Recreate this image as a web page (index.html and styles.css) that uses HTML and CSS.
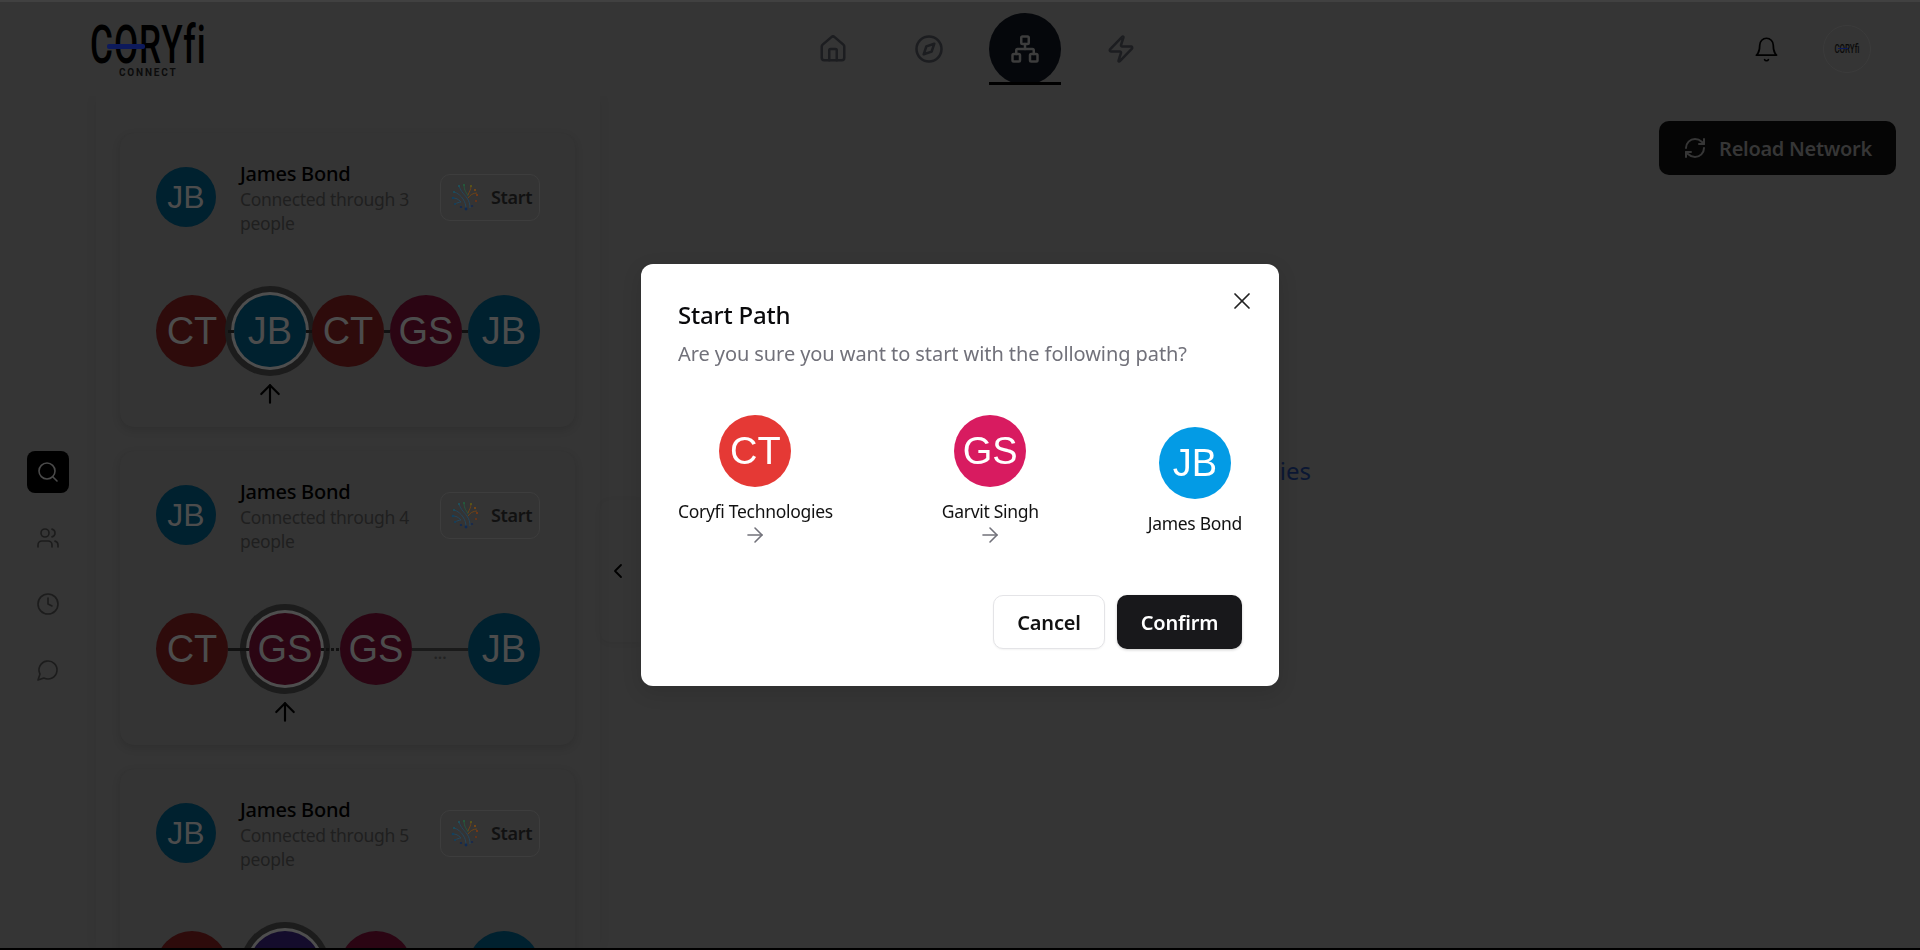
FILE: index.html
```html
<!DOCTYPE html>
<html lang="en">
<head>
  <meta charset="UTF-8" />
  <meta name="viewport" content="width=device-width, initial-scale=1.0" />
  <title>Coryfi Connect</title>
  <link rel="stylesheet" href="styles.css">
</head>
<body>
  <svg class="sprite" aria-hidden="true">
    <symbol id="i-home" viewBox="0 0 24 24"><path d="M15 21v-8a1 1 0 0 0-1-1h-4a1 1 0 0 0-1 1v8"/><path d="M3 10a2 2 0 0 1 .709-1.528l7-5.999a2 2 0 0 1 2.582 0l7 5.999A2 2 0 0 1 21 10v9a2 2 0 0 1-2 2H5a2 2 0 0 1-2-2z"/></symbol>
    <symbol id="i-compass" viewBox="0 0 24 24"><circle cx="12" cy="12" r="10"/><polygon points="16.24 7.76 14.12 14.12 7.76 16.24 9.88 9.88"/></symbol>
    <symbol id="i-network" viewBox="0 0 24 24"><rect x="16" y="16" width="6" height="6" rx="1"/><rect x="2" y="16" width="6" height="6" rx="1"/><rect x="9" y="2" width="6" height="6" rx="1"/><path d="M5 16v-3a1 1 0 0 1 1-1h12a1 1 0 0 1 1 1v3"/><path d="M12 12V8"/></symbol>
    <symbol id="i-zap" viewBox="0 0 24 24"><path d="M4 14a1 1 0 0 1-.78-1.63l9.9-10.2a.5.5 0 0 1 .86.46l-1.92 6.02A1 1 0 0 0 13 10h7a1 1 0 0 1 .78 1.63l-9.9 10.2a.5.5 0 0 1-.86-.46l1.92-6.02A1 1 0 0 0 11 14z"/></symbol>
    <symbol id="i-bell" viewBox="0 0 24 24"><path d="M6 8a6 6 0 0 1 12 0c0 7 3 9 3 9H3s3-2 3-9"/><path d="M10.3 21a1.94 1.94 0 0 0 3.4 0"/></symbol>
    <symbol id="i-search" viewBox="0 0 24 24"><circle cx="11" cy="11" r="8"/><path d="m21 21-4.3-4.3"/></symbol>
    <symbol id="i-users" viewBox="0 0 24 24"><path d="M16 21v-2a4 4 0 0 0-4-4H6a4 4 0 0 0-4 4v2"/><circle cx="9" cy="7" r="4"/><path d="M22 21v-2a4 4 0 0 0-3-3.87"/><path d="M16 3.13a4 4 0 0 1 0 7.75"/></symbol>
    <symbol id="i-clock" viewBox="0 0 24 24"><circle cx="12" cy="12" r="10"/><polyline points="12 6 12 12 16 14"/></symbol>
    <symbol id="i-chat" viewBox="0 0 24 24"><path d="M7.9 20A9 9 0 1 0 4 16.1L2 22Z"/></symbol>
    <symbol id="i-reload" viewBox="0 0 24 24"><path d="M3 12a9 9 0 0 1 9-9 9.75 9.75 0 0 1 6.74 2.74L21 8"/><path d="M21 3v5h-5"/><path d="M21 12a9 9 0 0 1-9 9 9.75 9.75 0 0 1-6.74-2.74L3 16"/><path d="M8 16H3v5"/></symbol>
    <symbol id="i-x" viewBox="0 0 24 24"><path d="M18 6 6 18"/><path d="m6 6 12 12"/></symbol>
    <symbol id="i-right" viewBox="0 0 24 24"><path d="M5 12h14"/><path d="m12 5 7 7-7 7"/></symbol>
    <symbol id="i-up" viewBox="0 0 24 24"><path d="m5 12 7-7 7 7"/><path d="M12 19V5"/></symbol>
    <symbol id="i-left" viewBox="0 0 24 24"><path d="m15 18-6-6 6-6"/></symbol>
    <symbol id="i-spark" viewBox="0 0 28 28">
      <g fill="none" stroke-width="1">
        <path stroke="#24465c" d="M8 3c2 6 6 9 8 12s3 6 3 10"/>
        <path stroke="#24465c" d="M3 9c4 1 7 4 9 7s3 6 3 10"/>
        <path stroke="#25583f" d="M13 2c0 6 3 8 4 11"/>
        <path stroke="#6b4318" d="M20 3c0 4-2 6-3 9"/>
        <path stroke="#6b4318" d="M26 10c-4 0-7 2-9 5"/>
        <path stroke="#24465c" d="M2 15c3 0 5 1 8 4"/>
        <path stroke="#24465c" d="M4 21c2-1 4-2 6-2"/>
      </g>
      <g>
        <circle cx="8" cy="3" r="1.1" fill="#1d5560"/><circle cx="13" cy="2" r="1.1" fill="#22603d"/>
        <circle cx="20" cy="3" r="1.1" fill="#5f5a14"/><circle cx="24" cy="7" r="1.1" fill="#804a10"/>
        <circle cx="26" cy="12" r="1.1" fill="#803a10"/><circle cx="25" cy="18" r="1.1" fill="#6e3314"/>
        <circle cx="21" cy="23" r="1.1" fill="#16284f"/><circle cx="15" cy="26" r="1.4" fill="#0e2a55"/>
        <circle cx="10" cy="24" r="1.1" fill="#0e2a55"/><circle cx="4" cy="21" r="1.1" fill="#12405e"/>
        <circle cx="2" cy="15" r="1.3" fill="#12405e"/><circle cx="3" cy="9" r="1.1" fill="#175060"/>
      </g>
    </symbol>
  </svg>

  <header class="topbar">
    <div class="logo">
      <span class="logo-word">CORYfi</span>
      <span class="logo-dash"></span>
      <span class="logo-sub">CONNECT</span>
    </div>
    <nav class="nav">
      <a class="nav-item"><svg class="icon icon-nav"><use href="#i-home"/></svg></a>
      <a class="nav-item"><svg class="icon icon-nav"><use href="#i-compass"/></svg></a>
      <a class="nav-item active"><svg class="icon icon-nav"><use href="#i-network"/></svg></a>
      <a class="nav-item"><svg class="icon icon-nav"><use href="#i-zap"/></svg></a>
    </nav>
    <div class="top-right">
      <svg class="icon icon-bell"><use href="#i-bell"/></svg>
      <div class="me">
        <span class="me-word">CORYfi</span>
        <span class="me-dash"></span>
      </div>
    </div>
  </header>

  <main class="main">
    <aside class="side">
      <a class="side-item active"><svg class="icon icon-side"><use href="#i-search"/></svg></a>
      <a class="side-item"><svg class="icon icon-side"><use href="#i-users"/></svg></a>
      <a class="side-item"><svg class="icon icon-side"><use href="#i-clock"/></svg></a>
      <a class="side-item"><svg class="icon icon-side"><use href="#i-chat"/></svg></a>
    </aside>

    <section class="paths">
      <article class="card">
        <div class="card-head">
          <div class="avatar small blue">JB</div>
          <div class="card-text">
            <div class="card-name">James Bond</div>
            <div class="card-sub">Connected through 3 people</div>
          </div>
          <button class="start-btn"><svg class="spark"><use href="#i-spark"/></svg>Start</button>
        </div>
        <div class="chain">
          <div class="avatar red">CT</div>
          <span class="link link-s"></span>
          <div class="avatar blue picked">JB</div>
          <span class="link link-s"></span>
          <div class="avatar red">CT</div>
          <span class="link link-s"></span>
          <div class="avatar pink">GS</div>
          <span class="link link-s"></span>
          <div class="avatar blue">JB</div>
        </div>
        <svg class="icon icon-up up-one"><use href="#i-up"/></svg>
      </article>

      <article class="card">
        <div class="card-head">
          <div class="avatar small blue">JB</div>
          <div class="card-text">
            <div class="card-name">James Bond</div>
            <div class="card-sub">Connected through 4 people</div>
          </div>
          <button class="start-btn"><svg class="spark"><use href="#i-spark"/></svg>Start</button>
        </div>
        <div class="chain">
          <div class="avatar red">CT</div>
          <span class="link link-a"></span>
          <div class="avatar pink picked">GS</div>
          <span class="link link-b dashed"></span>
          <div class="avatar pink">GS</div>
          <span class="link link-l"><span class="more">...</span></span>
          <div class="avatar blue">JB</div>
        </div>
        <svg class="icon icon-up up-two"><use href="#i-up"/></svg>
      </article>

      <article class="card">
        <div class="card-head">
          <div class="avatar small blue">JB</div>
          <div class="card-text">
            <div class="card-name">James Bond</div>
            <div class="card-sub">Connected through 5 people</div>
          </div>
          <button class="start-btn"><svg class="spark"><use href="#i-spark"/></svg>Start</button>
        </div>
        <div class="chain">
          <div class="avatar red">CT</div>
          <span class="link link-a"></span>
          <div class="avatar purple picked">GS</div>
          <span class="link link-b dashed"></span>
          <div class="avatar pink">GS</div>
          <span class="link link-l"><span class="more">...</span></span>
          <div class="avatar blue">JB</div>
        </div>
      </article>
    </section>

    <div class="handle"><svg class="icon icon-handle"><use href="#i-left"/></svg></div>

    <section class="canvas">
      <button class="reload-btn"><svg class="icon icon-reload"><use href="#i-reload"/></svg>Reload Network</button>
      <span class="node-label">Coryfi Technologies</span>
    </section>
  </main>
  <div class="edge"></div>

  <div class="scrim">
    <div class="modal">
      <svg class="icon modal-close"><use href="#i-x"/></svg>
      <h2 class="modal-title">Start Path</h2>
      <p class="modal-sub">Are you sure you want to start with the following path?</p>
      <div class="path-row">
        <div class="step">
          <div class="avatar red lit">CT</div>
          <div class="step-name">Coryfi Technologies</div>
          <svg class="icon step-arrow"><use href="#i-right"/></svg>
        </div>
        <div class="step">
          <div class="avatar pink lit">GS</div>
          <div class="step-name">Garvit Singh</div>
          <svg class="icon step-arrow"><use href="#i-right"/></svg>
        </div>
        <div class="step">
          <div class="avatar blue lit">JB</div>
          <div class="step-name">James Bond</div>
        </div>
      </div>
      <div class="modal-actions">
        <button class="btn btn-cancel">Cancel</button>
        <button class="btn btn-confirm">Confirm</button>
      </div>
    </div>
  </div>
</body>
</html>
```

FILE: styles.css
```css
* {
  box-sizing: border-box;
  margin: 0;
  padding: 0;
}
body {
  display: flex;
  flex-direction: column;
  height: 100vh;
  overflow: hidden;
  background: #353535;
  border-top: 2px solid #414141;
  font-family: 'Noto Sans', 'Open Sans', sans-serif;
  color: #000;
}
.sprite {
  display: none;
}
.icon {
  fill: none;
  stroke: currentColor;
  stroke-width: 2;
  stroke-linecap: round;
  stroke-linejoin: round;
  flex: none;
}

/* top bar */
.topbar {
  display: flex;
  justify-content: space-between;
  align-items: center;
  height: 94px;
  padding: 0 49px 0 90px;
  flex: none;
}
.logo {
  position: relative;
  width: 110px;
  height: 54px;
  margin-top: 5px;
}
.logo-word {
  display: block;
  height: 40px;
  font-family: 'Roboto', sans-serif;
  font-size: 54px;
  font-weight: 500;
  line-height: 40px;
  letter-spacing: 1.5px;
  color: #000;
  transform: scaleX(.65);
  transform-origin: left center;
  white-space: nowrap;
}
.logo-dash {
  position: absolute;
  left: 17px;
  top: 19px;
  width: 38px;
  height: 5px;
  background: #0d1a5c;
  border-radius: 2px;
}
.logo-sub {
  position: absolute;
  left: 29px;
  top: 42px;
  font-family: 'Roboto', sans-serif;
  font-size: 10px;
  font-weight: 700;
  line-height: 12px;
  letter-spacing: 1.8px;
  color: #0c0c0c;
}
.nav {
  display: flex;
  gap: 24px;
}
.nav-item {
  position: relative;
  display: flex;
  justify-content: center;
  align-items: center;
  width: 72px;
  height: 72px;
  color: #1c1d20;
}
.nav-item.active {
  background: #05070b;
  border-radius: 50%;
  color: #3d3d3d;
}
.nav-item.active::after {
  content: '';
  position: absolute;
  left: 0;
  right: 0;
  bottom: 0;
  height: 3px;
  background: #000;
}
.icon-nav {
  width: 30px;
  height: 30px;
}
.top-right {
  display: flex;
  align-items: center;
  gap: 43px;
}
.icon-bell {
  width: 27px;
  height: 27px;
  stroke-width: 1.5;
  color: #000;
}
.me {
  position: relative;
  display: flex;
  justify-content: center;
  align-items: center;
  width: 48px;
  height: 48px;
  border: 1px solid #3b3b3b;
  border-radius: 50%;
  overflow: hidden;
}
.me-word {
  font-family: 'Roboto', sans-serif;
  font-size: 12px;
  font-weight: 500;
  color: #0a0a0a;
  transform: scaleX(.66);
}
.me-dash {
  position: absolute;
  left: 14px;
  top: 22px;
  width: 10px;
  height: 1px;
  background: #0d1a5c;
}

/* main area */
.main {
  display: flex;
  flex: 1;
  min-height: 0;
  overflow: hidden;
}
.side {
  display: flex;
  flex-direction: column;
  gap: 24px;
  width: 96px;
  padding: 355px 0 0 27px;
  flex: none;
}
.side-item {
  display: flex;
  justify-content: center;
  align-items: center;
  width: 42px;
  height: 42px;
  border-radius: 8px;
  color: #1c1c1c;
}
.side-item.active {
  background: #000;
  color: #4a4a4a;
}
.icon-side {
  width: 24px;
  height: 24px;
  stroke-width: 1.6;
}
.paths {
  display: flex;
  flex-direction: column;
  gap: 24px;
  width: 504px;
  padding: 37px 0 0 24px;
  flex: none;
  box-shadow: 0 0 12px rgba(0, 0, 0, .05);
}
.card {
  width: 455px;
  height: 294px;
  padding: 25px 35px 0 36px;
  flex: none;
  background: #343434;
  border-radius: 14px;
  box-shadow: 0 3px 8px rgba(0, 0, 0, .12);
}
.card-head {
  display: flex;
  align-items: center;
  height: 78px;
}
.avatar {
  display: flex;
  justify-content: center;
  align-items: center;
  width: 72px;
  height: 72px;
  flex: none;
  border-radius: 50%;
  font-family: 'Liberation Sans', Arial, sans-serif;
  font-size: 38px;
  color: #4c4c4c;
}
.avatar.small {
  width: 60px;
  height: 60px;
  font-size: 32px;
}
.avatar.red { background: #2e0b0b; }
.avatar.pink { background: #2b0513; }
.avatar.blue { background: #00212f; }
.avatar.purple { background: #140c2c; }
.avatar.picked {
  box-shadow: 0 0 0 3px #4e4e4e, 0 0 0 9px #1c1c1c;
}
.card-text {
  width: 176px;
  margin-left: 24px;
}
.card-name {
  margin-bottom: -2px;
  font-size: 20px;
  font-weight: 500;
  line-height: 30px;
  letter-spacing: -.25px;
}
.card-sub {
  font-size: 17.5px;
  line-height: 24px;
  letter-spacing: -.3px;
  color: #1f1f1f;
}
.start-btn {
  display: flex;
  align-items: center;
  gap: 12px;
  width: 100px;
  height: 47px;
  margin-left: auto;
  padding-left: 10px;
  background: none;
  border: 1px solid #3d3d3d;
  border-radius: 10px;
  font-family: inherit;
  font-size: 18px;
  font-weight: 600;
  letter-spacing: -.35px;
  color: #111;
}
.spark {
  width: 28px;
  height: 28px;
  flex: none;
}
.chain {
  display: flex;
  align-items: center;
  margin-top: 59px;
}
.link {
  position: relative;
  height: 3px;
  flex: none;
  background: #111;
}
.link-s { width: 6px; }
.link-a { width: 21px; }
.link-b { width: 19px; }
.link-l { width: 56px; background: #1a1a1a; }
.dashed {
  background: repeating-linear-gradient(90deg, #111 0 3px, transparent 3px 5px);
}
.more {
  position: absolute;
  left: 0;
  right: 0;
  top: -4px;
  text-align: center;
  font-size: 16px;
  font-weight: 600;
  line-height: 18px;
  color: #222;
}
.icon-up {
  display: block;
  width: 30px;
  height: 30px;
  margin-top: 12px;
  stroke-width: 1.7;
  color: #000;
}
.up-one { margin-left: 99px; }
.up-two { margin-left: 114px; }

/* collapse handle and graph area */
.handle {
  display: flex;
  align-items: center;
  justify-content: center;
  width: 40px;
  height: 142px;
  margin-top: 404px;
  padding-right: 4px;
  flex: none;
  border-radius: 10px 0 0 10px;
  box-shadow: 0 1px 6px rgba(0, 0, 0, .05);
}
.icon-handle {
  width: 24px;
  height: 24px;
  stroke-width: 1.8;
  color: #000;
}
.canvas {
  position: relative;
  display: flex;
  flex-direction: column;
  align-items: flex-end;
  flex: 1;
  padding: 25px 24px 0 0;
}
.reload-btn {
  display: flex;
  align-items: center;
  justify-content: center;
  gap: 12px;
  width: 237px;
  height: 54px;
  background: #050505;
  border: none;
  border-radius: 10px;
  font-family: inherit;
  font-size: 20px;
  font-weight: 600;
  letter-spacing: -.3px;
  color: #363636;
}
.icon-reload {
  width: 24px;
  height: 24px;
}
.node-label {
  position: absolute;
  right: 609px;
  top: 359px;
  font-size: 24px;
  line-height: 32px;
  white-space: nowrap;
  color: #0b1733;
}
.edge {
  height: 2px;
  flex: none;
  background: #000;
}

/* modal */
.scrim {
  position: fixed;
  inset: 0;
  display: flex;
  justify-content: center;
  align-items: center;
}
.modal {
  position: relative;
  width: 638px;
  height: 422px;
  padding: 35px 37px 37px 37px;
  background: #fff;
  border-radius: 12px;
  box-shadow: 0 6px 20px rgba(0, 0, 0, .12);
}
.modal-close {
  position: absolute;
  top: 23px;
  right: 23px;
  width: 28px;
  height: 28px;
  stroke-width: 1.5;
  color: #222;
}
.modal-title {
  font-size: 24px;
  font-weight: 500;
  line-height: 32px;
  letter-spacing: -.2px;
  color: #09090b;
}
.modal-sub {
  margin-top: 9px;
  font-size: 20px;
  line-height: 28px;
  letter-spacing: -.08px;
  color: #71717a;
}
.path-row {
  display: flex;
  justify-content: space-between;
  align-items: center;
  height: 132px;
  margin-top: 47px;
}
.step {
  display: flex;
  flex-direction: column;
  align-items: center;
}
.avatar.lit {
  font-size: 38px;
  color: #fff;
}
.avatar.lit.red { background: #e53935; }
.avatar.lit.pink { background: #d81b60; }
.avatar.lit.blue { background: #039be5; }
.step-name {
  margin-top: 12px;
  font-size: 17.5px;
  line-height: 24px;
  letter-spacing: -.3px;
  color: #111;
}
.step-arrow {
  width: 24px;
  height: 24px;
  stroke-width: 1.6;
  color: #71717a;
}
.modal-actions {
  display: flex;
  justify-content: flex-end;
  gap: 12px;
  margin-top: 48px;
}
.btn {
  height: 54px;
  padding-top: 1px;
  border-radius: 10px;
  font-family: inherit;
  font-size: 20px;
  font-weight: 600;
  letter-spacing: -.2px;
}
.btn-cancel {
  width: 112px;
  background: #fff;
  border: 1px solid #e4e4e7;
  color: #111;
  box-shadow: 0 1px 2px rgba(0, 0, 0, .05);
}
.btn-confirm {
  width: 125px;
  background: #18181b;
  border: none;
  color: #fff;
  box-shadow: 0 1px 3px rgba(0, 0, 0, .2);
}
```
